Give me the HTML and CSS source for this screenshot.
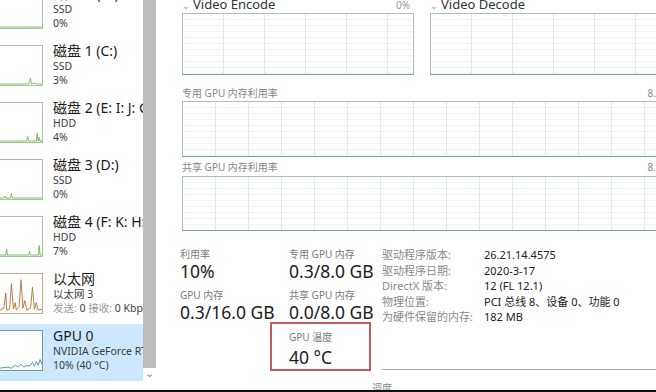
FILE: index.html
```html
<!DOCTYPE html>
<html lang="zh-CN">
<head>
  <meta charset="UTF-8" />
  <title>任务管理器 - GPU 0</title>
  <link rel="stylesheet" href="styles.css">
</head>
<body>
  <div class="window">
    <div class="frame">
      <div class="sidebar">
        <div class="list">
          <div class="item">
            <div class="thumb disk">
              <svg viewBox="0 0 44 41" preserveAspectRatio="none"><polyline points="0,40 44,40" /></svg>
            </div>
            <div class="info">
              <div class="title">磁盘 0 (G:)</div>
              <div class="sub">SSD</div>
              <div class="sub">0%</div>
            </div>
          </div>
          <div class="item">
            <div class="thumb disk">
              <svg viewBox="0 0 44 41" preserveAspectRatio="none"><polyline points="0,40 30,40 31,37 32,34 33,40 36,39 38,40 44,40" /></svg>
            </div>
            <div class="info">
              <div class="title">磁盘 1 (C:)</div>
              <div class="sub">SSD</div>
              <div class="sub">3%</div>
            </div>
          </div>
          <div class="item">
            <div class="thumb disk">
              <svg viewBox="0 0 44 41" preserveAspectRatio="none"><polyline points="0,40 28,40 29,35 30,40 38,40 39,32 40,40 41,36 42,40 44,40" /></svg>
            </div>
            <div class="info">
              <div class="title">磁盘 2 (E: I: J: G:)</div>
              <div class="sub">HDD</div>
              <div class="sub">4%</div>
            </div>
          </div>
          <div class="item">
            <div class="thumb disk">
              <svg viewBox="0 0 44 41" preserveAspectRatio="none"><polyline points="0,40 4,40 5,38 6,40 11,40 12,35 13,40 44,40" /></svg>
            </div>
            <div class="info">
              <div class="title">磁盘 3 (D:)</div>
              <div class="sub">SSD</div>
              <div class="sub">0%</div>
            </div>
          </div>
          <div class="item">
            <div class="thumb disk">
              <svg viewBox="0 0 44 41" preserveAspectRatio="none"><polyline points="0,40 6,40 7,34 8,40 30,40 31,36 32,40 40,40 41,30 42,40 44,40" /></svg>
            </div>
            <div class="info">
              <div class="title">磁盘 4 (F: K: H:)</div>
              <div class="sub">HDD</div>
              <div class="sub">7%</div>
            </div>
          </div>
          <div class="item">
            <div class="thumb net">
              <svg viewBox="0 0 44 41" preserveAspectRatio="none"><polyline points="0,38 4,36 6,20 7,38 10,37 12,10 14,37 16,30 17,38 20,34 22,6 24,36 26,28 28,38 32,36 34,14 36,37 38,30 40,38 44,37" /></svg>
            </div>
            <div class="info">
              <div class="title">以太网</div>
              <div class="sub">以太网 3</div>
              <div class="sub"><span class="dim">发送:</span> 0 <span class="dim">接收:</span> 0 Kbps</div>
            </div>
          </div>
          <div class="item selected">
            <div class="thumb gpu">
              <svg viewBox="0 0 44 41" preserveAspectRatio="none"><polyline points="0,39 8,38 12,39 16,36 19,38 22,35 25,38 28,36 31,37 34,33 36,37 38,32 40,36 42,30 44,35" /></svg>
            </div>
            <div class="info">
              <div class="title">GPU 0</div>
              <div class="sub">NVIDIA GeForce RTX 2060</div>
              <div class="sub">10% (40 °C)</div>
            </div>
          </div>
        </div>
      </div>

      <div class="scrollbar">
        <div class="scroll-thumb"></div>
        <div class="scroll-arrow">&#8964;</div>
      </div>

      <div class="main">
        <div class="engines">
          <div class="engine">
            <div class="engine-head">
              <span class="chev">&#8964;</span>
              <span class="engine-name">Video Encode</span>
              <span class="pct">0%</span>
            </div>
            <div class="chart engine-chart"></div>
          </div>
          <div class="engine">
            <div class="engine-head">
              <span class="chev">&#8964;</span>
              <span class="engine-name">Video Decode</span>
              <span class="pct">0%</span>
            </div>
            <div class="chart engine-chart"></div>
          </div>
        </div>

        <div class="chart-label first">
          <span>专用 GPU 内存利用率</span>
          <span>8.0 GB</span>
        </div>
        <div class="chart mem-chart"></div>

        <div class="chart-label">
          <span>共享 GPU 内存利用率</span>
          <span>8.0 GB</span>
        </div>
        <div class="chart mem-chart shared"></div>

        <div class="stats">
          <div class="stat-col first-col">
            <div class="stat-label">利用率</div>
            <div class="stat-value">10%</div>
            <div class="stat-label gap">GPU 内存</div>
            <div class="stat-value">0.3/16.0 GB</div>
          </div>
          <div class="stat-col">
            <div class="stat-label">专用 GPU 内存</div>
            <div class="stat-value">0.3/8.0 GB</div>
            <div class="stat-label gap">共享 GPU 内存</div>
            <div class="stat-value">0.0/8.0 GB</div>
            <div class="temp-box">
              <div class="stat-label">GPU 温度</div>
              <div class="stat-value">40 °C</div>
            </div>
          </div>
          <div class="props">
            <div class="prop"><span class="prop-key">驱动程序版本:</span><span>26.21.14.4575</span></div>
            <div class="prop"><span class="prop-key">驱动程序日期:</span><span>2020-3-17</span></div>
            <div class="prop"><span class="prop-key">DirectX 版本:</span><span>12 (FL 12.1)</span></div>
            <div class="prop"><span class="prop-key">物理位置:</span><span>PCI 总线 8、设备 0、功能 0</span></div>
            <div class="prop"><span class="prop-key">为硬件保留的内存:</span><span>182 MB</span></div>
            <div class="props-rule"></div>
            <div class="props-more">调度</div>
          </div>
        </div>
      </div>
    </div>
    <div class="bottom-edge"></div>
  </div>
</body>
</html>
```

FILE: styles.css
```css
html, body {
  margin: 0;
  padding: 0;
  background: #fff;
}

body {
  font-family: "Segoe UI", "Noto Sans", "Noto Sans CJK SC", sans-serif;
  color: #1b1b1b;
}

.window {
  width: 656px;
  height: 392px;
  overflow: hidden;
  display: flex;
  flex-direction: column;
}

.frame {
  flex: 1;
  display: flex;
  overflow: hidden;
}

/* left list */
.sidebar {
  width: 143px;
  flex: none;
  overflow: hidden;
}

.list {
  margin-top: -18px;
}

.item {
  display: flex;
  height: 57px;
  box-sizing: border-box;
  padding-top: 4px;
}

.item.selected {
  background: #cce8ff;
}

.thumb {
  width: 44px;
  height: 41px;
  margin-top: 2px;
  margin-left: -1px;
  border: 1px solid #a3c5a0;
  background: #fff;
  box-sizing: border-box;
  flex: none;
}

.thumb svg {
  display: block;
  width: 100%;
  height: 100%;
}

.thumb polyline {
  fill: none;
  stroke-width: 1;
}

.thumb.disk polyline {
  stroke: #7cbb5a;
}

.thumb.net {
  border-color: #c9a98a;
}

.thumb.net polyline {
  stroke: #b07a3c;
}

.thumb.gpu {
  border-color: #6f9bae;
}

.thumb.gpu polyline {
  stroke: #4f8ea8;
}

.info {
  margin-left: 10px;
  white-space: nowrap;
  overflow: hidden;
  flex: 1;
}

.title {
  font-size: 14px;
  line-height: 16px;
  color: #1b1b1b;
}

.sub {
  font-size: 10.5px;
  line-height: 14px;
  color: #3c3c3c;
}

.dim {
  color: #9a9a9a;
}

/* scrollbar */
.scrollbar {
  width: 13px;
  flex: none;
  display: flex;
  flex-direction: column;
  align-items: center;
}

.scroll-thumb {
  width: 13px;
  height: 368px;
  background: #bdbdbd;
}

.scroll-arrow {
  font-size: 11px;
  line-height: 8px;
  color: #8a8a8a;
  margin-top: 1px;
}

/* right panel */
.main {
  flex: none;
  width: 496px;
  padding-left: 26px;
  overflow: hidden;
}

.engines {
  display: grid;
  grid-template-columns: 232px 260px;
  column-gap: 16px;
  margin-top: -3px;
}

.engine-head {
  display: flex;
  align-items: baseline;
  height: 15px;
  font-size: 13px;
  line-height: 15px;
  color: #333;
}

.chev {
  font-size: 9px;
  color: #999;
  margin-right: 3px;
}

.engine-name {
  flex: 1;
}

.pct {
  font-size: 10px;
  color: #999;
  margin-right: 4px;
}

.chart {
  border: 1px solid #a9bfc5;
  border-bottom-color: #7d9ea7;
  box-sizing: border-box;
  background-color: #fff;
  background-image:
    repeating-linear-gradient(90deg, transparent 0 32px, #e1e9ec 32px 33px),
    repeating-linear-gradient(180deg, transparent 0 5px, #f0f4f5 5px 6px);
}

.engine-chart {
  height: 62px;
  margin-top: 1px;
  background-image:
    repeating-linear-gradient(90deg, transparent 0 40px, #e1e9ec 40px 41px),
    repeating-linear-gradient(180deg, transparent 0 5px, #f0f4f5 5px 6px);
}

.chart-label {
  display: flex;
  justify-content: space-between;
  font-size: 10px;
  line-height: 14px;
  color: #888;
  margin-top: 3px;
}

.chart-label.first {
  margin-top: 11px;
}

.mem-chart {
  height: 56px;
  margin-top: 1px;
}

.mem-chart.shared {
  margin-top: 2px;
  height: 55px;
}

/* statistics */
.stats {
  display: flex;
  margin-top: 16px;
  margin-left: -2px;
}

.stat-col {
  width: 109px;
  flex: none;
}

.stat-col + .stat-col {
  width: 93px;
}

.stat-label {
  font-size: 10px;
  line-height: 14px;
  color: #7a7a7a;
  white-space: nowrap;
}

.stat-label.gap {
  margin-top: 7px;
}

.stat-value {
  font-size: 17.5px;
  line-height: 20px;
  color: #1b1b1b;
  white-space: nowrap;
}

.temp-box {
  margin-top: 0;
  margin-left: -19px;
  width: 101px;
  height: 49px;
  box-sizing: border-box;
  border: 2px solid #c35a5a;
  padding: 6px 0 0 17px;
}

.temp-box .stat-value {
  margin-top: 3px;
}

.props {
  flex: none;
  width: 300px;
}

.prop {
  display: flex;
  font-size: 11px;
  line-height: 15.5px;
  color: #222;
  white-space: nowrap;
}

.prop-key {
  width: 102px;
  flex: none;
  color: #8a8a8a;
}

.props-rule {
  margin-top: 44px;
  height: 1px;
  background: #9db3b9;
}

.props-more {
  margin-top: 12px;
  margin-left: -10px;
  font-size: 10px;
  line-height: 12px;
  color: #888;
}

.bottom-edge {
  height: 2px;
  background: #111;
  flex: none;
}
```
